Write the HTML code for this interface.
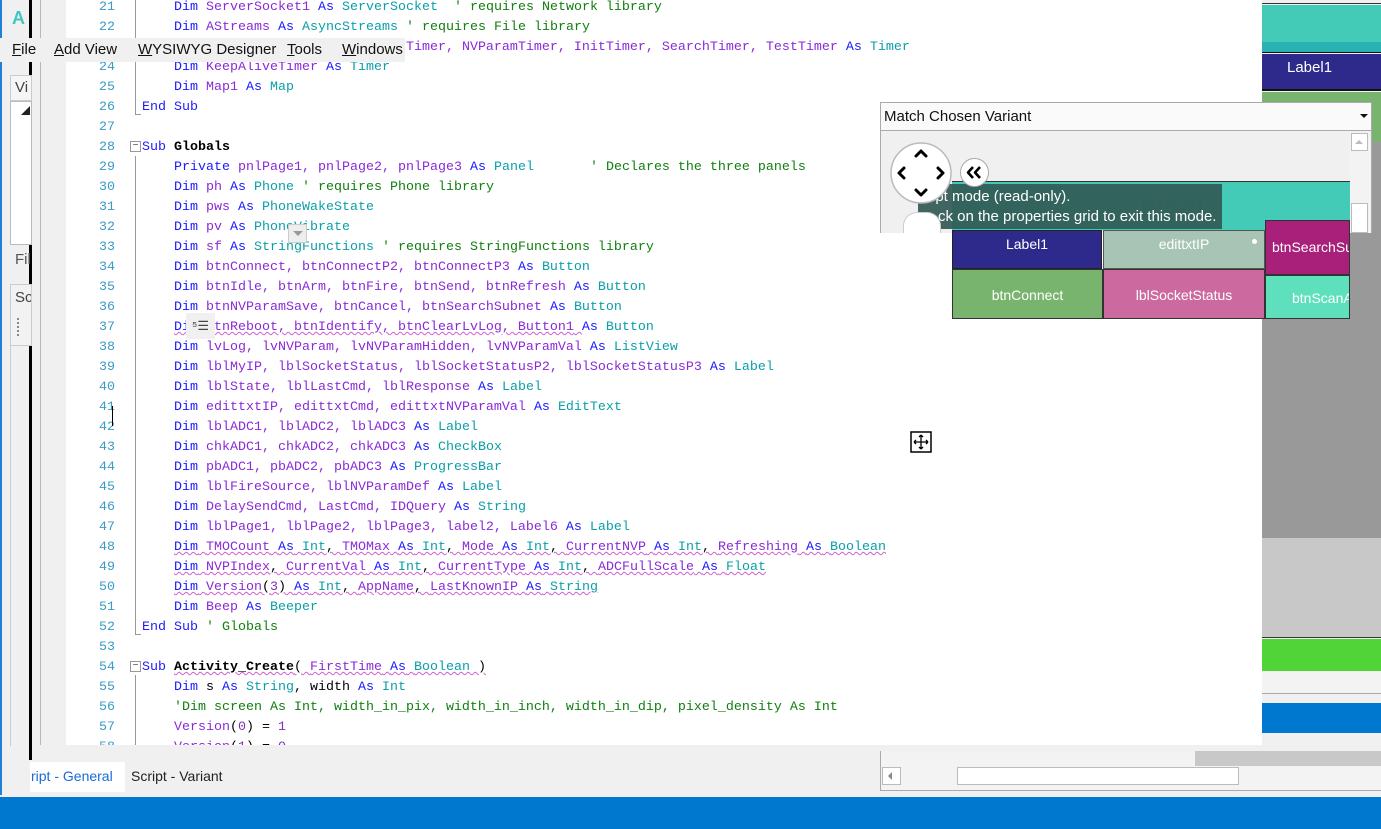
<!DOCTYPE html>
<html><head><meta charset="utf-8"><style>
*{margin:0;padding:0;box-sizing:border-box}
body{width:1381px;height:829px;overflow:hidden;background:#f0f0f0;position:relative;font-family:"Liberation Sans",sans-serif}
.a{position:absolute}
.code{font-family:"Liberation Mono",monospace;font-size:13.33px;line-height:20px;white-space:pre}
.k{color:#1a1aff}.v{color:#8a2ad8}.t{color:#0aa0a8}.c{color:#108010}.b{color:#000;font-weight:bold}.n{color:#7a30c0}
.sq{text-decoration:underline wavy #d060d0;text-decoration-thickness:1px}
.ln{color:#3a9ac8;text-align:right;width:50px}
.m{position:absolute;top:0}
</style></head><body>
<!-- editor -->
<div class="a" style="left:0;top:0;width:1262px;height:745px;background:#fff"></div>
<div class="a" style="left:31px;top:0;width:35px;height:745px;background:#f0f0f0"></div>
<div class="a" style="left:40px;top:0;width:1px;height:745px;background:#b8b8b8"></div>
<div class="a" style="left:0;top:0;width:29px;height:795px;background:#f0f0f0;border-left:2px solid #2080d8"></div>
<div class="a" style="left:29px;top:0;width:3px;height:760px;background:#000"></div>
<div class="a" style="left:12px;top:8px;color:#40c8c0;font-weight:bold;font-size:18px">A</div>
<div class="a" style="left:10px;top:75px;width:22px;height:26px;border:1px solid #ccc;background:#f5f5f5;font-size:15px;color:#444;padding:3px 0 0 4px;overflow:hidden">Vi</div>
<div class="a" style="left:10px;top:101px;width:22px;height:144px;border:1px solid #bbb;background:#fff"></div>
<div class="a" style="left:21px;top:106px;width:0;height:0;border-left:9px solid transparent;border-bottom:9px solid #222"></div>
<div class="a" style="left:15px;top:251px;font-size:15px;color:#555">Fil</div>
<div class="a" style="left:10px;top:284px;width:22px;height:62px;border:1px solid #ccc;background:#f2f2f2;font-size:15px;color:#444;padding:4px 0 0 4px;overflow:hidden">Sc</div>
<div class="a" style="left:17px;top:318px;width:2px;height:18px;border-left:2px dotted #888"></div>
<div class="a" style="left:10px;top:346px;width:22px;height:400px;border-left:1px solid #ccc"></div>
<!-- line numbers -->
<div class="a code ln" style="left:65px;top:-2px">21
22
23
24
25
26
27
28
29
30
31
32
33
34
35
36
37
38
39
40
41
42
43
44
45
46
47
48
49
50
51
52
53
54
55
56
57
58</div>
<div class="a" style="left:135px;top:0;width:1px;height:114px;background:#999"></div>
<div class="a" style="left:135px;top:114px;width:6px;height:1px;background:#999"></div>
<div class="a" style="left:135px;top:156px;width:1px;height:478px;background:#999"></div>
<div class="a" style="left:135px;top:634px;width:6px;height:1px;background:#999"></div>
<div class="a" style="left:135px;top:675px;width:1px;height:70px;background:#999"></div>
<div class="a" style="left:130px;top:141px;width:11px;height:11px;border:1px solid #999;background:#fff;font-size:10px;line-height:8px;text-align:center;color:#444">−</div>
<div class="a" style="left:130px;top:661px;width:11px;height:11px;border:1px solid #999;background:#fff;font-size:10px;line-height:8px;text-align:center;color:#444">−</div>
<div class="a code" style="left:142px;top:-2px;height:747px;overflow:hidden">    <span class="k">Dim</span> <span class="v">ServerSocket1</span> <span class="k">As</span> <span class="t">ServerSocket</span>  <span class="c">' requires Network library</span>
    <span class="k">Dim</span> <span class="v">AStreams</span> <span class="k">As</span> <span class="t">AsyncStreams</span> <span class="c">' requires File library</span>
    <span class="k">Dim</span> <span class="v">ConTimer, RetryTimer, AckTimer, NVParamTimer, InitTimer, SearchTimer, TestTimer</span> <span class="k">As</span> <span class="t">Timer</span>
    <span class="k">Dim</span> <span class="v">KeepAliveTimer</span> <span class="k">As</span> <span class="t">Timer</span>
    <span class="k">Dim</span> <span class="v">Map1</span> <span class="k">As</span> <span class="t">Map</span>
<span class="k">End Sub</span>

<span class="k">Sub</span> <span class="b">Globals</span>
    <span class="k">Private</span> <span class="v">pnlPage1, pnlPage2, pnlPage3</span> <span class="k">As</span> <span class="t">Panel</span>       <span class="c">' Declares the three panels</span>
    <span class="k">Dim</span> <span class="v">ph</span> <span class="k">As</span> <span class="t">Phone</span> <span class="c">' requires Phone library</span>
    <span class="k">Dim</span> <span class="v">pws</span> <span class="k">As</span> <span class="t">PhoneWakeState</span>
    <span class="k">Dim</span> <span class="v">pv</span> <span class="k">As</span> <span class="t">PhoneVibrate</span>
    <span class="k">Dim</span> <span class="v">sf</span> <span class="k">As</span> <span class="t">StringFunctions</span> <span class="c">' requires StringFunctions library</span>
    <span class="k">Dim</span> <span class="v">btnConnect, btnConnectP2, btnConnectP3</span> <span class="k">As</span> <span class="t">Button</span>
    <span class="k">Dim</span> <span class="v">btnIdle, btnArm, btnFire, btnSend, btnRefresh</span> <span class="k">As</span> <span class="t">Button</span>
    <span class="k">Dim</span> <span class="v">btnNVParamSave, btnCancel, btnSearchSubnet</span> <span class="k">As</span> <span class="t">Button</span>
    <span class="k sq">Dim</span><span class="sq"> <span class="v">btnReboot, btnIdentify, btnClearLvLog, Button1</span> </span><span class="k">As</span> <span class="t">Button</span>
    <span class="k">Dim</span> <span class="v">lvLog, lvNVParam, lvNVParamHidden, lvNVParamVal</span> <span class="k">As</span> <span class="t">ListView</span>
    <span class="k">Dim</span> <span class="v">lblMyIP, lblSocketStatus, lblSocketStatusP2, lblSocketStatusP3</span> <span class="k">As</span> <span class="t">Label</span>
    <span class="k">Dim</span> <span class="v">lblState, lblLastCmd, lblResponse</span> <span class="k">As</span> <span class="t">Label</span>
    <span class="k">Dim</span> <span class="v">edittxtIP, edittxtCmd, edittxtNVParamVal</span> <span class="k">As</span> <span class="t">EditText</span>
    <span class="k">Dim</span> <span class="v">lblADC1, lblADC2, lblADC3</span> <span class="k">As</span> <span class="t">Label</span>
    <span class="k">Dim</span> <span class="v">chkADC1, chkADC2, chkADC3</span> <span class="k">As</span> <span class="t">CheckBox</span>
    <span class="k">Dim</span> <span class="v">pbADC1, pbADC2, pbADC3</span> <span class="k">As</span> <span class="t">ProgressBar</span>
    <span class="k">Dim</span> <span class="v">lblFireSource, lblNVParamDef</span> <span class="k">As</span> <span class="t">Label</span>
    <span class="k">Dim</span> <span class="v">DelaySendCmd, LastCmd, IDQuery</span> <span class="k">As</span> <span class="t">String</span>
    <span class="k">Dim</span> <span class="v">lblPage1, lblPage2, lblPage3, label2, Label6</span> <span class="k">As</span> <span class="t">Label</span>
    <span class="sq"><span class="k">Dim</span> <span class="v">TMOCount</span> <span class="k">As</span> <span class="t">Int</span>, <span class="v">TMOMax</span> <span class="k">As</span> <span class="t">Int</span>, <span class="v">Mode</span> <span class="k">As</span> <span class="t">Int</span>, <span class="v">CurrentNVP</span> <span class="k">As</span> <span class="t">Int</span>, <span class="v">Refreshing</span> <span class="k">As</span> <span class="t">Boolean</span></span>
    <span class="sq"><span class="k">Dim</span> <span class="v">NVPIndex</span>, <span class="v">CurrentVal</span> <span class="k">As</span> <span class="t">Int</span>, <span class="v">CurrentType</span> <span class="k">As</span> <span class="t">Int</span>, <span class="v">ADCFullScale</span> <span class="k">As</span> <span class="t">Float</span></span>
    <span class="sq"><span class="k">Dim</span> <span class="v">Version</span>(<span class="n">3</span>) <span class="k">As</span> <span class="t">Int</span>, <span class="v">AppName</span>, <span class="v">LastKnownIP</span> <span class="k">As</span> <span class="t">String</span></span>
    <span class="k">Dim</span> <span class="v">Beep</span> <span class="k">As</span> <span class="t">Beeper</span>
<span class="k">End Sub</span> <span class="c">' Globals</span>

<span class="k">Sub</span> <span class="b sq">Activity_Create</span><span class="sq">( <span class="v">FirstTime</span> <span class="k">As</span> <span class="t">Boolean</span> )</span>
    <span class="k">Dim</span> s <span class="k">As</span> <span class="t">String</span>, width <span class="k">As</span> <span class="t">Int</span>
    <span class="c">'Dim screen As Int, width_in_pix, width_in_inch, width_in_dip, pixel_density As Int</span>
    <span class="v">Version</span>(<span class="n">0</span>) = <span class="n">1</span>
    <span class="v">Version</span>(<span class="n">1</span>) = <span class="n">0</span></div>
<div class="a" style="left:112px;top:406px;width:1px;height:20px;background:#000"></div>
<!-- menu overlay -->
<div class="a" style="left:0;top:38px;width:405px;height:24px;background:#f0f0f0;font-size:15px;color:#111;line-height:24px;white-space:pre">
<span class="m" style="left:12px"><u>F</u>ile</span><span class="m" style="left:54px"><u>A</u>dd View</span><span class="m" style="left:138px"><u>W</u>YSIWYG Designer</span><span class="m" style="left:287px"><u>T</u>ools</span><span class="m" style="left:342px"><u>W</u>indows</span></div>
<div class="a" style="left:288px;top:224px;width:19px;height:19px;background:#eee;border:1px solid #ccc"></div>
<div class="a" style="left:293px;top:231px;border-left:5px solid transparent;border-right:5px solid transparent;border-top:5px solid #999"></div>
<div class="a" style="left:186px;top:313px;width:29px;height:26px;background:#f0f0f0;font-size:13px;color:#444;text-align:center;line-height:26px">⁵☰</div>
<!-- move icon -->
<svg class="a" style="left:910px;top:431px" width="22" height="22" viewBox="0 0 22 22"><rect x="1" y="1" width="20" height="20" fill="#fff" stroke="#000" stroke-width="1.5"/><path d="M11 4v14M4 11h14M11 4l-2 2m2-2l2 2M11 18l-2-2m2 2l2-2M4 11l2-2m-2 2l2 2M18 11l-2-2m2 2l-2 2" stroke="#000" stroke-width="1.3" fill="none"/></svg>
<!-- right column -->
<div class="a" style="left:1262px;top:0;width:119px;height:4px;background:#f0f0f0;border-bottom:1px solid #333"></div>
<div class="a" style="left:1262px;top:5px;width:119px;height:37px;background:#44cbb8"></div>
<div class="a" style="left:1262px;top:42px;width:119px;height:11px;background:#2ab2b2;border-bottom:1px solid #111"></div>
<div class="a" style="left:1262px;top:54px;width:119px;height:37px;background:#2e2a8c;border-bottom:2px solid #111;color:#fff;font-size:15px;padding:5px 0 0 25px">Label1</div>
<div class="a" style="left:1262px;top:92px;width:119px;height:50px;background:#78b46e"></div>
<div class="a" style="left:1262px;top:142px;width:119px;height:396px;background:#999"></div>
<div class="a" style="left:1262px;top:538px;width:119px;height:100px;background:#c8c8c8;border-bottom:1px solid #333"></div>
<div class="a" style="left:1262px;top:639px;width:119px;height:32px;background:#50d438"></div>
<div class="a" style="left:1262px;top:671px;width:119px;height:23px;background:#f3f3f3;border-bottom:1px solid #aaa"></div>
<div class="a" style="left:1262px;top:703px;width:119px;height:30px;background:#0078d0"></div>
<!-- panel -->
<div class="a" style="left:880px;top:102px;width:492px;height:131px;background:#f0f0f0;border:1px solid #aaa;border-bottom:none"></div>
<div class="a" style="left:881px;top:103px;width:490px;height:28px;background:#fafafa;border-bottom:1px solid #aaa;font-size:15px;padding:5px 0 0 3px;color:#111">Match Chosen Variant</div>
<div class="a" style="left:1360px;top:114px;border-left:4px solid transparent;border-right:4px solid transparent;border-top:4px solid #111"></div>
<div class="a" style="left:1350px;top:132px;width:20px;height:101px;background:#f3f3f3"></div>
<div class="a" style="left:1351px;top:133px;width:17px;height:18px;border:1px solid #bbb;background:#fff"></div>
<div class="a" style="left:1355px;top:140px;border-left:4px solid transparent;border-right:4px solid transparent;border-bottom:4px solid #bbb"></div>
<div class="a" style="left:1351px;top:203px;width:17px;height:30px;border:1px solid #bbb;background:#fff"></div>
<!-- designer grid -->
<div class="a" style="left:952px;top:181px;width:398px;height:49px;background:#44cbb8;border-top:1px solid #333"></div>
<div class="a" style="left:1142px;top:197px;font-size:16px;color:#5a9a90">lblPage1</div>
<div class="a" style="left:952px;top:230px;width:150px;height:39px;background:#2e2a8c;border:1px solid #222;color:#fff;font-size:14px;text-align:center;line-height:26px">Label1</div>
<div class="a" style="left:1103px;top:230px;width:162px;height:39px;background:#a8c4b4;border:1px solid #555;color:#fff;font-size:14px;text-align:center;line-height:26px">edittxtIP</div>
<div class="a" style="left:1252px;top:239px;width:5px;height:5px;border-radius:50%;background:#fff"></div>
<div class="a" style="left:1265px;top:220px;width:85px;height:55px;background:#a8207a;border:1px solid #333;color:#fff;font-size:14px;line-height:52px;padding-left:6px;overflow:hidden;white-space:nowrap">btnSearchSu</div>
<div class="a" style="left:952px;top:269px;width:151px;height:50px;background:#78b46e;border:1px solid #333;color:#fff;font-size:14px;text-align:center;line-height:50px">btnConnect</div>
<div class="a" style="left:1103px;top:269px;width:162px;height:50px;background:#cc6aa0;border:1px solid #333;color:#fff;font-size:14px;text-align:center;line-height:50px">lblSocketStatus</div>
<div class="a" style="left:1265px;top:275px;width:85px;height:44px;background:#5ee0bc;border:1px solid #333;color:#fff;font-size:14px;line-height:44px;padding-left:26px;overflow:hidden;white-space:nowrap">btnScanA</div>
<div class="a" style="left:918px;top:184px;width:304px;height:45px;background:rgba(50,90,85,.92);color:#fff;font-size:15px;line-height:20px;padding:3px 0 0 14px;white-space:nowrap;overflow:hidden">ipt mode (read-only).<br><span style="margin-left:6px">ck on the properties grid to exit this mode.</span></div>
<div class="a" style="left:903px;top:212px;width:38px;height:21px;background:#fff;border:1px solid #ccc;border-bottom:none;border-radius:14px 14px 0 0"></div>
<svg class="a" style="left:888px;top:140px" width="66" height="66" viewBox="0 0 66 66"><circle cx="33" cy="33" r="30" fill="#fff" stroke="#bbb" stroke-width="1.5"/><path d="M28 16l5-5 5 5M28 50l5 5 5-5M16 28l-5 5 5 5M50 28l5 5-5 5" fill="none" stroke="#000" stroke-width="3" stroke-linecap="round" stroke-linejoin="round"/></svg>
<svg class="a" style="left:959px;top:157px" width="31" height="31" viewBox="0 0 31 31"><circle cx="15.5" cy="15.5" r="14" fill="#fff" stroke="#aaa"/><path d="M14 10l-5 5.5 5 5.5M21 10l-5 5.5 5 5.5" fill="none" stroke="#000" stroke-width="2.6" stroke-linejoin="round"/></svg>
<!-- bottom scroll areas -->
<div class="a" style="left:40px;top:745px;width:840px;height:15px;background:#f0f0f0"></div>
<div class="a" style="left:880px;top:745px;width:501px;height:6px;background:#f0f0f0"></div>
<div class="a" style="left:880px;top:751px;width:501px;height:40px;background:#f3f3f3;border-left:1px solid #aaa;border-bottom:1px solid #aaa"></div>
<div class="a" style="left:1195px;top:751px;width:186px;height:15px;background:#c8c8c8"></div>
<div class="a" style="left:882px;top:767px;width:19px;height:18px;border:1px solid #bbb;background:#fff"></div>
<div class="a" style="left:888px;top:772px;border-top:4px solid transparent;border-bottom:4px solid transparent;border-right:4px solid #888"></div>
<div class="a" style="left:957px;top:767px;width:282px;height:18px;border:1px solid #bbb;background:#fff"></div>
<div class="a" style="left:30px;top:762px;width:95px;height:30px;background:#fff;color:#1a6ad8;font-size:14px;line-height:28px;padding-left:1px">ript - General</div>
<div class="a" style="left:131px;top:762px;font-size:14px;line-height:28px;color:#222">Script - Variant</div>
<div class="a" style="left:0;top:797px;width:1381px;height:32px;background:#0078d0"></div>
</body></html>
